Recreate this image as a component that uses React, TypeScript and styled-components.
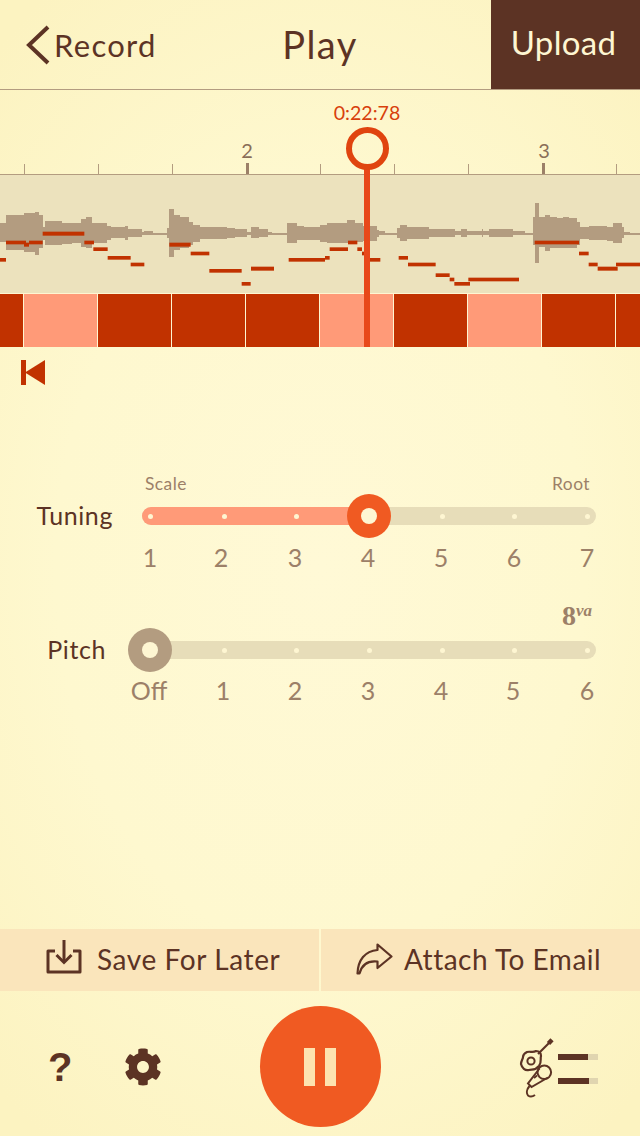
import React from "react";
import styled, { createGlobalStyle } from "styled-components";
import { FaCog } from "react-icons/fa";

const BROWN = "#5c3324";
const DARK_RED = "#c13200";
const SALMON = "#ff9a78";
const ORANGE = "#f05a22";
const MUTED = "#9c8068";
const TRACK = "#e7ddb9";
const FONT = `Lato, "Open Sans", sans-serif`;

const Global = createGlobalStyle`
  html, body { margin: 0; padding: 0; background: #fdf5ca; }
  #root { width: 640px; height: 1136px; overflow: hidden; }
  * { box-sizing: border-box; }
`;

const Page = styled.div`
  position: relative;
  width: 640px;
  height: 1136px;
  display: flex;
  flex-direction: column;
  font-family: ${FONT};
  color: ${BROWN};
  background: radial-gradient(ellipse 480px 700px at 50% 50%, #fff9d6 0%, #fef8cf 55%, #fcf3c1 100%);
`;

const Header = styled.header`
  height: 90px;
  flex: none;
  display: grid;
  grid-template-columns: 1fr auto 1fr;
  align-items: center;
  border-bottom: 1px solid #b39c80;
`;
const BackLink = styled.div`
  display: flex;
  align-items: center;
  padding-left: 25px;
  gap: 4px;
  font-size: 31px;
  letter-spacing: 1.3px;
`;
const Title = styled.div`
  font-size: 38px;
  letter-spacing: 1.4px;
  margin-top: -1px;
`;
const UploadButton = styled.div`
  justify-self: end;
  width: 149px;
  height: 89px;
  background: ${BROWN};
  color: #fef6d2;
  font-size: 33px;
  letter-spacing: 0.3px;
  display: flex;
  align-items: center;
  justify-content: center;
  padding: 0 4px 6px 0;
`;

const Timeline = styled.section`
  position: relative;
  flex: none;
  height: 257px;
  display: flex;
  flex-direction: column;
`;
const Ruler = styled.div`
  position: relative;
  height: 85px;
  flex: none;
  border-bottom: 1px solid #b39c80;
`;
const Tick = styled.span<{ $x: number; $major?: boolean }>`
  position: absolute;
  left: ${(p) => p.$x}px;
  bottom: 0;
  width: ${(p) => (p.$major ? 3 : 1)}px;
  height: ${(p) => (p.$major ? 11 : 10)}px;
  background: ${(p) => (p.$major ? "#9c8068" : "#b39c80")};
`;
const BarNumber = styled.span<{ $x: number }>`
  position: absolute;
  left: ${(p) => p.$x}px;
  top: 48px;
  width: 30px;
  margin-left: -15px;
  text-align: center;
  font-size: 20px;
  line-height: 24px;
  color: #8a6e58;
`;
const TimeLabel = styled.span`
  position: absolute;
  left: 317px;
  top: 11px;
  width: 100px;
  text-align: center;
  font-size: 19.6px;
  line-height: 24px;
  color: #d8400c;
`;
const WaveBand = styled.div`
  flex: none;
  height: 118px;
  background: #ece2bd;
  svg { display: block; }
`;
const Strip = styled.div`
  flex: none;
  height: 54px;
  display: flex;
  background: #fef6d2;
  padding-top: 1px;
`;
const Cell = styled.div<{ $w: number; $light?: boolean }>`
  flex: none;
  width: ${(p) => p.$w}px;
  margin-right: 1px;
  background: ${(p) => (p.$light ? SALMON : DARK_RED)};
`;
const Playhead = styled.div`
  position: absolute;
  left: 346px;
  top: 37px;
  width: 43px;
  height: 220px;
  pointer-events: none;
`;

const Transport = styled.div`
  flex: none;
  height: 582px;
  display: flex;
  flex-direction: column;
`;
const SkipButton = styled.div`
  padding: 13px 0 0 21px;
  height: 120px;
  flex: none;
  svg { display: block; }
`;
const SliderBlock = styled.div<{ $top?: number }>`
  flex: none;
  position: relative;
  height: 128px;
  margin-top: ${(p) => p.$top ?? 0}px;
`;
const HintRow = styled.div`
  height: 26px;
  padding: 6px 50px 0 145px;
  display: flex;
  justify-content: space-between;
  align-items: center;
  font-size: 17.4px;
  letter-spacing: 0.45px;
  color: ${MUTED};
`;
const TrackRow = styled.div`
  display: flex;
  align-items: center;
  height: 44px;
  margin-top: 1px;
`;
const RowLabel = styled.div<{ $w: number }>`
  width: ${(p) => p.$w}px;
  flex: none;
  text-align: right;
  font-size: 25px;
  letter-spacing: 0.6px;
  padding-bottom: 2px;
`;
const Track = styled.div<{ $left: number; $w: number }>`
  position: relative;
  margin-left: ${(p) => p.$left}px;
  flex: none;
  width: ${(p) => p.$w}px;
  height: 18px;
  border-radius: 9px;
  background: ${TRACK};
`;
const TrackFill = styled.div<{ $w: number }>`
  position: absolute;
  left: 0;
  top: 0;
  bottom: 0;
  width: ${(p) => p.$w}px;
  border-radius: 9px 0 0 9px;
  background: ${SALMON};
`;
const Dot = styled.span<{ $x: number }>`
  position: absolute;
  left: ${(p) => p.$x}px;
  top: 50%;
  width: 5px;
  height: 5px;
  margin: -2.5px 0 0 -2.5px;
  border-radius: 50%;
  background: #fef6d2;
`;
const Knob = styled.span<{ $x: number; $color: string }>`
  position: absolute;
  left: ${(p) => p.$x}px;
  top: 50%;
  width: 44px;
  height: 44px;
  margin: -22px 0 0 -22px;
  border-radius: 50%;
  background: ${(p) => p.$color};
  display: flex;
  align-items: center;
  justify-content: center;
  &::after {
    content: "";
    width: 16px;
    height: 16px;
    border-radius: 50%;
    background: #fef6d2;
  }
`;
const Numbers = styled.div<{ $top: number }>`
  position: relative;
  height: 40px;
  padding-top: ${(p) => p.$top}px;
`;
const Num = styled.span<{ $x: number }>`
  position: absolute;
  left: ${(p) => p.$x}px;
  width: 60px;
  margin-left: -30px;
  text-align: center;
  font-size: 25px;
  line-height: 30px;
  color: ${MUTED};
`;
const OctaveHint = styled.div`
  height: 26px;
  padding: 2px 48px 0 0;
  text-align: right;
  color: ${MUTED};
  font-family: "Liberation Serif", serif;
  font-weight: 700;
  font-size: 28px;
  line-height: 26px;
  sup {
    font-size: 17px;
    font-style: italic;
    font-weight: 700;
    line-height: 0;
    vertical-align: 9px;
  }
`;

const ActionBar = styled.div`
  position: absolute;
  left: 0;
  right: 0;
  top: 929px;
  height: 62px;
  display: grid;
  grid-template-columns: 319px 319px;
  column-gap: 2px;
`;
const ActionButton = styled.div<{ $pad: number; $gap: number; $spacing: number }>`
  background: #fae5bb;
  display: flex;
  align-items: center;
  padding: 0 0 2px ${(p) => p.$pad}px;
  gap: ${(p) => p.$gap}px;
  font-size: 28px;
  letter-spacing: ${(p) => p.$spacing}px;
`;
const ActionIcon = styled.span<{ $lift: number }>`
  display: block;
  flex: none;
  margin-bottom: ${(p) => p.$lift}px;
  svg { display: block; }
`;

const Controls = styled.div`
  position: absolute;
  left: 0;
  right: 0;
  top: 991px;
  height: 151px;
  display: grid;
  grid-template-columns: 1fr auto 1fr;
  align-items: center;
`;
const LeftTools = styled.div`
  display: flex;
  align-items: center;
  padding-left: 48px;
  gap: 52px;
`;
const Help = styled.span`
  width: 24px;
  font-family: "Liberation Sans", sans-serif;
  font-weight: 700;
  font-size: 40px;
  line-height: 44px;
  text-align: center;
`;
const PauseButton = styled.div`
  width: 121px;
  height: 121px;
  border-radius: 50%;
  background: ${ORANGE};
  display: flex;
  align-items: center;
  justify-content: center;
  gap: 10px;
`;
const PauseBar = styled.span`
  width: 11px;
  height: 38px;
  background: #fde3b0;
`;
const RightTools = styled.div`
  justify-self: end;
  display: flex;
  align-items: flex-start;
  padding-right: 42px;
  svg { display: block; flex: none; }
`;
const MixBars = styled.div`
  display: flex;
  flex-direction: column;
  gap: 18px;
  margin-top: 18px;
`;
const MixBar = styled.div<{ $fill: number }>`
  width: 40px;
  height: 6px;
  background: linear-gradient(to right, ${BROWN} ${(p) => p.$fill}px, #e0d5b0 ${(p) => p.$fill}px);
`;

type Box = [number, number, number, number];
const waveL: Box[] = [
  [0,18,160,215],[18,72,135,240],[72,105,130,245],[105,118,125,255],[118,128,135,235],[128,135,170,210],
  [135,185,153,225],[185,215,158,222],[215,242,160,218],[242,258,148,232],[258,275,142,235],[275,322,158,218],
  [322,333,168,210],[333,375,172,205],[375,385,168,210],[385,425,178,202],[425,432,185,195],[432,460,183,193],
  [460,500,188,194],[500,507,175,205],[507,522,118,260],[522,540,135,240],[540,567,142,235],[567,578,155,225],
  [578,600,165,215],[600,680,172,207],[680,705,175,205],[705,740,178,202],[740,752,185,195],[752,778,172,205],
  [778,803,178,200],[803,815,185,193],[815,862,188,194],[862,890,160,218],[890,912,168,210],[912,960,172,210],
];
const waveR: Box[] = [
  [0,20,165,215],[20,40,158,218],[40,80,158,220],[80,105,150,220],[105,130,158,215],[130,170,168,212],
  [170,178,180,200],[178,195,183,195],[195,232,188,194],[232,240,175,205],[240,262,165,213],[262,328,170,207],
  [328,405,177,202],[405,422,183,196],[422,442,177,202],[442,485,183,196],[485,490,177,202],[490,507,183,196],
  [507,580,177,202],[580,615,183,196],[615,640,188,194],[640,645,140,225],[645,657,100,278],[657,675,140,232],
  [675,690,135,242],[690,710,140,235],[710,730,145,235],[730,748,142,235],[748,770,145,235],[770,780,155,225],
  [780,808,170,208],[808,860,168,210],[860,880,170,212],[880,905,158,218],[905,912,170,205],[912,930,185,195],
  [930,960,188,194],
];
const notesL: Box[] = [
  [0,18,264,275],[18,78,212,223],[72,87,218,230],[87,128,212,223],[128,253,185,197],[253,282,212,223],
  [280,323,232,243],[323,392,258,269],[392,433,278,289],[508,572,218,230],[572,628,245,256],[628,725,297,308],
  [725,752,336,347],[753,822,290,302],[866,960,264,275],
];
const notesR: Box[] = [
  [0,15,264,275],[15,29,258,269],[29,84,232,243],[84,112,212,223],[112,126,232,243],[126,140,245,256],
  [147,181,264,275],[236,264,258,269],[264,347,278,289],[347,389,310,321],[389,403,323,334],[403,450,336,347],
  [445,597,323,334],[644,777,212,223],[777,806,245,256],[806,833,278,289],[833,893,290,302],[888,960,278,289],
];

const rects = (list: Box[], off: number, fill: string, key: string) =>
  list.map(([a, b, t, u], i) => (
    <rect key={key + i} x={a + off} y={t - 15} width={b - a} height={u - t} fill={fill} />
  ));

const Waveform = () => (
  <svg width="640" height="118" viewBox="0 0 1920 354">
    <g shapeRendering="crispEdges">
      <rect x="0" y="173" width="1920" height="6" fill="#b39c80" />
      {rects(waveL, 0, "#b39c80", "wl")}
      {rects(waveR, 960, "#b39c80", "wr")}
    </g>
    {rects(notesL, 0, DARK_RED, "nl")}
    {rects(notesR, 960, DARK_RED, "nr")}
  </svg>
);

const ticks = [24, 98, 172, 320, 394, 468, 616];
const cells: [number, boolean][] = [
  [23, false],[73, true],[73, false],[73, false],[73, false],[73, true],[73, false],[73, true],[73, false],[30, false],
];
const tuningDots = [8.5, 82, 154, 300, 372, 445];
const pitchDots = [94, 166, 239, 312, 384, 457];

const Chevron = () => (
  <svg width="25" height="40" viewBox="0 0 25 40" fill="none">
    <path d="M23 2 L4 20 L23 38" stroke={BROWN} strokeWidth="4" />
  </svg>
);
const PlayheadIcon = () => (
  <svg width="43" height="220" viewBox="0 0 43 220">
    <rect x="18" y="38" width="6" height="182" fill="#e8481a" />
    <circle cx="21.5" cy="21.5" r="18.5" fill="none" stroke="#e0440f" strokeWidth="6" />
  </svg>
);
const SkipIcon = () => (
  <svg width="25" height="25" viewBox="0 0 25 25">
    <rect x="0" y="0" width="5" height="25" fill={DARK_RED} />
    <path d="M4 12.5 L24 0 V25 Z" fill={DARK_RED} />
  </svg>
);
const SaveIcon = () => (
  <svg width="36" height="34" viewBox="0 0 36 34" fill="none" stroke={BROWN} strokeWidth="3">
    <path d="M9 11 H2 V32 H34 V11 H27" strokeLinejoin="round" />
    <path d="M18 0 V22" />
    <path d="M10.5 15 L18 22.5 L25.5 15" />
  </svg>
);
const ShareIcon = () => (
  <svg width="37" height="32" viewBox="0 0 37 32" fill="none" stroke={BROWN} strokeWidth="2.2" strokeLinejoin="round">
    <path d="M1.5 30.5 C2 17 9 8 21.5 7 V1.5 L35.5 13.5 L21.5 25 V18.5 C13 17.5 6 21 3.5 30.5 Z" />
  </svg>
);
const InstrumentIcon = () => (
  <svg width="40" height="62" viewBox="0 0 40 62" fill="none" stroke={BROWN} strokeWidth="2">
    <path d="M20 18 L32 6" strokeWidth="2.2" />
    <path d="M30.5 7.5 L34 3.7" strokeWidth="4.4" />
    <path d="M9 16 C12 15 15 17 18 15 C21 15 23 17 23 20 C22 23 24 26 21 30 C17 35 14 33 11 34 C7 35 4 32 3 28 C3 25 5 23 5 21 C5 18 7 17 9 16 Z" strokeWidth="2.2" />
    <circle cx="13" cy="25" r="3.6" strokeWidth="2" />
    <circle cx="26.3" cy="36.3" r="6.8" strokeWidth="2" />
    <path d="M21.5 32.5 L10 47.5 L13.5 51 L30 41.5" strokeWidth="2" />
    <path d="M16 42 L19 39.5" strokeWidth="1.8" />
    <path d="M11.5 50 C9 53 8 57 10 59.5 C12 61 15 60.5 17 59" strokeWidth="2" />
  </svg>
);

const Slider = ({
  label, labelW, left, width, fill, knobX, knobColor, dots,
}: {
  label: string; labelW: number; left: number; width: number; fill?: number; knobX: number; knobColor: string; dots: number[];
}) => (
  <TrackRow>
    <RowLabel $w={labelW}>{label}</RowLabel>
    <Track $left={left} $w={width}>
      {fill ? <TrackFill $w={fill} /> : null}
      {dots.map((d) => <Dot key={d} $x={d} />)}
      <Knob $x={knobX} $color={knobColor} />
    </Track>
  </TrackRow>
);

export default function App() {
  return (
    <Page>
      <Global />
      <Header>
        <BackLink><Chevron />Record</BackLink>
        <Title>Play</Title>
        <UploadButton>Upload</UploadButton>
      </Header>

      <Timeline>
        <Ruler>
          <TimeLabel>0:22:78</TimeLabel>
          <BarNumber $x={247}>2</BarNumber>
          <BarNumber $x={544}>3</BarNumber>
          {ticks.map((t) => <Tick key={t} $x={t} />)}
          <Tick $x={246} $major />
          <Tick $x={542} $major />
        </Ruler>
        <WaveBand><Waveform /></WaveBand>
        <Strip>
          {cells.map(([w, l], i) => <Cell key={i} $w={w} $light={l} />)}
        </Strip>
        <Playhead><PlayheadIcon /></Playhead>
      </Timeline>

      <Transport>
        <SkipButton><SkipIcon /></SkipButton>
        <SliderBlock>
          <HintRow><span>Scale</span><span>Root</span></HintRow>
          <Slider label="Tuning" labelW={113} left={29} width={454} fill={215} knobX={227} knobColor={ORANGE}
            dots={tuningDots} />
          <Numbers $top={4}>
            {[150, 221, 295, 368, 441, 514, 587].map((x, i) => <Num key={x} $x={x}>{i + 1}</Num>)}
          </Numbers>
        </SliderBlock>
        <SliderBlock $top={6}>
          <OctaveHint>8<sup>va</sup></OctaveHint>
          <Slider label="Pitch" labelW={106} left={24} width={466} knobX={20} knobColor="#b39c80"
            dots={pitchDots} />
          <Numbers $top={3}>
            {["Off", "1", "2", "3", "4", "5", "6"].map((t, i) => (
              <Num key={t} $x={[149, 223, 295, 368, 441, 513, 587][i]}>{t}</Num>
            ))}
          </Numbers>
        </SliderBlock>
      </Transport>

      <ActionBar>
        <ActionButton $pad={46} $gap={15} $spacing={0.6}><ActionIcon $lift={4}><SaveIcon /></ActionIcon>Save For Later</ActionButton>
        <ActionButton $pad={35} $gap={11} $spacing={0.5}><ActionIcon $lift={0}><ShareIcon /></ActionIcon>Attach To Email</ActionButton>
      </ActionBar>

      <Controls>
        <LeftTools>
          <Help>?</Help>
          <FaCog size={38} color={BROWN} />
        </LeftTools>
        <PauseButton><PauseBar /><PauseBar /></PauseButton>
        <RightTools>
          <InstrumentIcon />
          <MixBars>
            <MixBar $fill={30} />
            <MixBar $fill={31} />
          </MixBars>
        </RightTools>
      </Controls>
    </Page>
  );
}
